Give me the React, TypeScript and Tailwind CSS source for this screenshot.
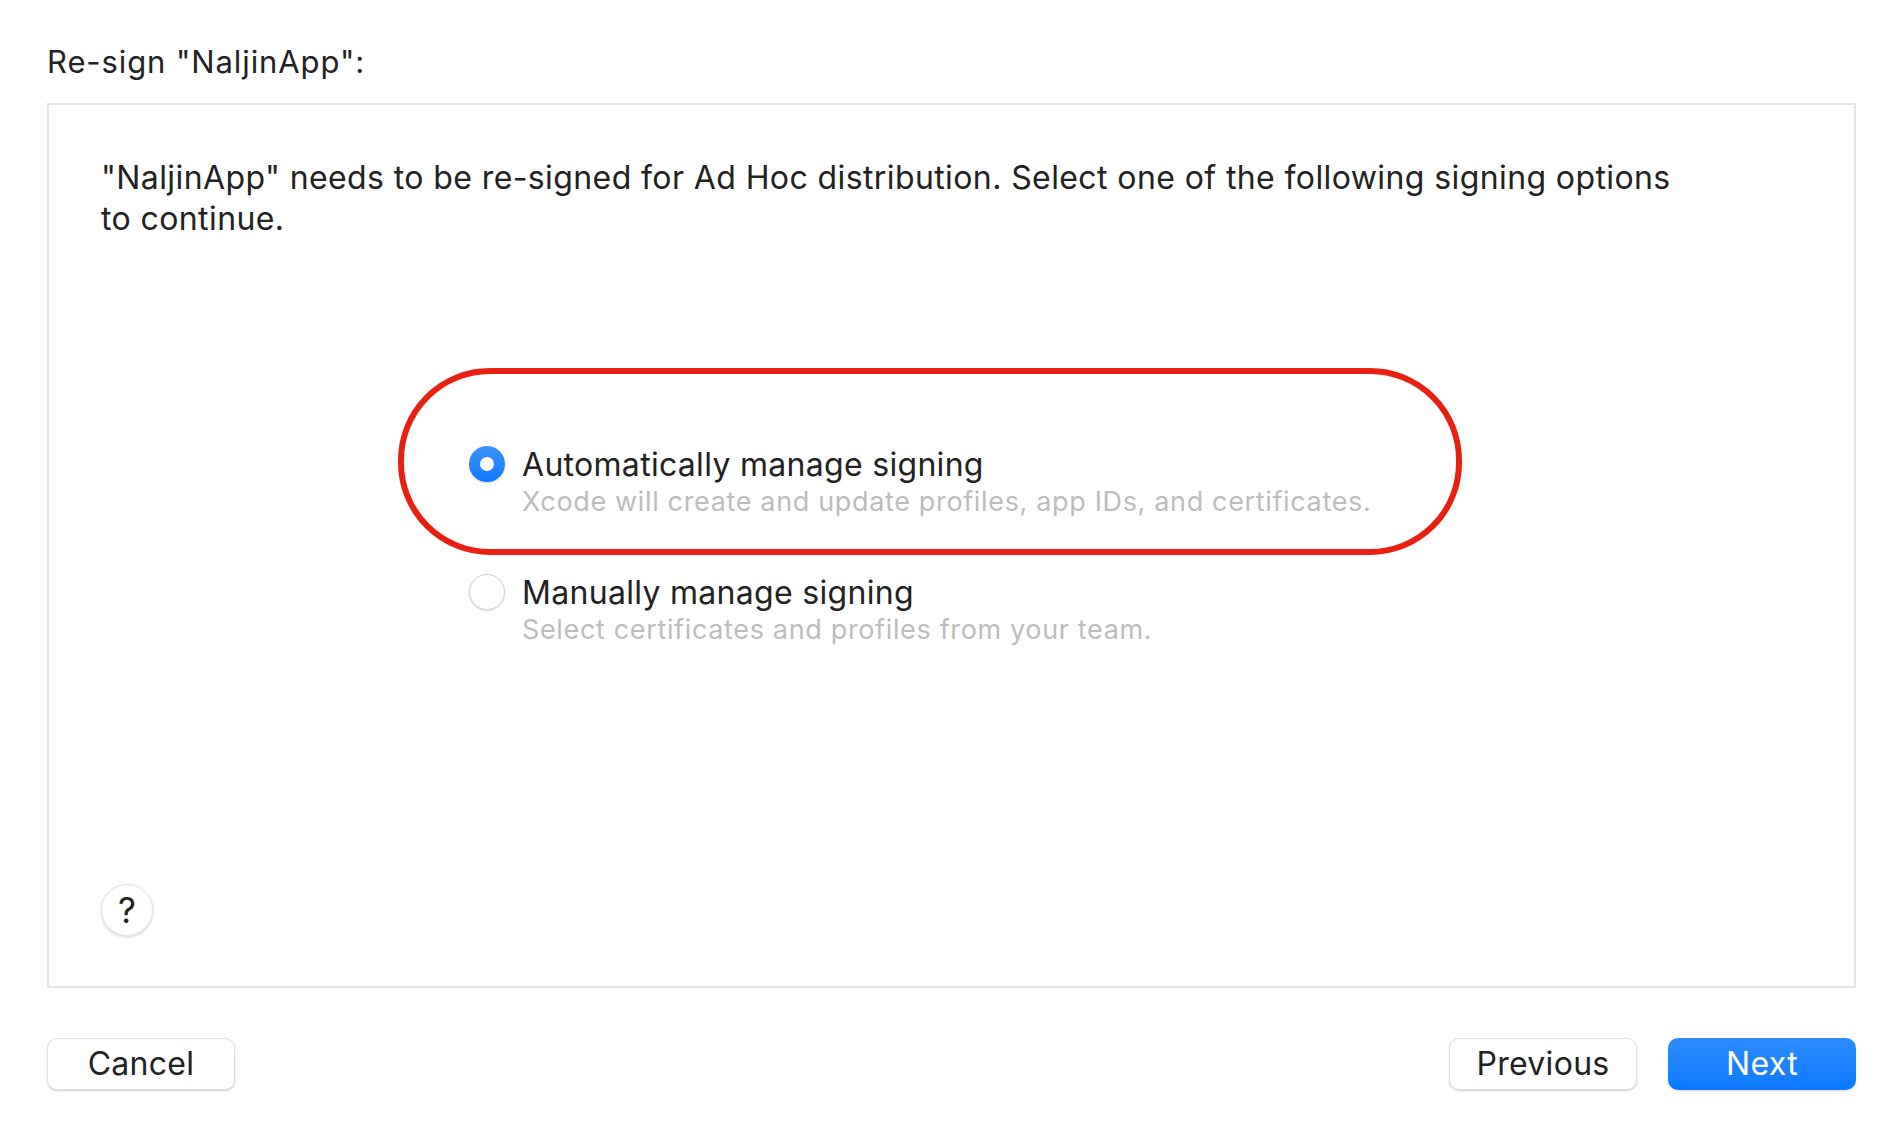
import React from "react";

const font = { fontFamily: 'Inter, "Noto Sans", sans-serif' };

function Radio({ checked }: { checked: boolean }) {
  if (checked) {
    return (
      <div className="w-[36px] h-[36px] rounded-full bg-gradient-to-b from-[#3b93fc] to-[#0a78ff] flex items-center justify-center shadow-[0_1px_2px_rgba(0,0,0,0.2)]">
        <div className="w-[14px] h-[14px] rounded-full bg-white" />
      </div>
    );
  }
  return (
    <div className="w-[36px] h-[36px] rounded-full bg-white border border-[#d2d2d2] shadow-[0_1px_2px_rgba(0,0,0,0.14)]" />
  );
}

function Option({ checked, title, sub }: { checked: boolean; title: string; sub: string }) {
  return (
    <div className="flex gap-[17px]">
      <div>
        <Radio checked={checked} />
      </div>
      <div className="flex flex-col">
        <div className="text-[32px] leading-[38px] text-[#222222] tracking-[0.3px]">{title}</div>
        <div className="text-[27px] leading-[36px] text-[#bcbcbc] tracking-[0.65px]">{sub}</div>
      </div>
    </div>
  );
}

function Button({ children, primary }: { children: React.ReactNode; primary?: boolean }) {
  return (
    <button
      className={
        primary
          ? "w-[188px] h-[52px] rounded-[10px] bg-gradient-to-b from-[#2b8cfd] to-[#0a79ff] text-white text-[32px] tracking-[0.3px] shadow-[0_1px_2px_rgba(0,0,0,0.15)]"
          : "w-[188px] h-[52px] rounded-[10px] bg-white border border-[#e2e2e2] text-[#222222] text-[32px] tracking-[0.3px] shadow-[0_1px_2px_rgba(0,0,0,0.2)]"
      }
      style={font}
    >
      {children}
    </button>
  );
}

export default function App() {
  return (
    <div className="w-[1892px] h-[1130px] bg-white flex flex-col pl-[47px] pr-[36px] pt-[44px]" style={font}>
      <div className="text-[31px] leading-[36px] text-[#222222] tracking-[0.9px] h-[59px]">Re-sign "NaljinApp":</div>
      <div className="relative h-[885px] border-2 border-[#e5e5e5] flex flex-col px-[52px] pt-[52px] pb-[50px]">
        <div className="text-[32px] leading-[41px] text-[#222222] tracking-[0.4px] w-[1600px]">
          "NaljinApp" needs to be re-signed for Ad Hoc distribution. Select one of the following signing options to continue.
        </div>
        <div className="flex flex-col gap-[54px] pl-[368px] mt-[207px]">
          <Option
            checked
            title="Automatically manage signing"
            sub="Xcode will create and update profiles, app IDs, and certificates."
          />
          <Option
            checked={false}
            title="Manually manage signing"
            sub="Select certificates and profiles from your team."
          />
        </div>
        <div className="absolute left-[349px] top-[263px] w-[1064px] h-[187px] rounded-[92px] border-[6px] border-[#e9200f] pointer-events-none" />
        <div className="mt-auto">
          <div className="w-[52px] h-[52px] rounded-full bg-white border border-[#e6e6e6] shadow-[0_1px_3px_rgba(0,0,0,0.18)] flex items-center justify-center text-[35px] text-[#222222]">
            ?
          </div>
        </div>
      </div>
      <div className="flex items-center mt-[50px]">
        <Button>Cancel</Button>
        <div className="flex-1" />
        <div className="flex gap-[31px]">
          <Button>Previous</Button>
          <Button primary>Next</Button>
        </div>
      </div>
    </div>
  );
}
